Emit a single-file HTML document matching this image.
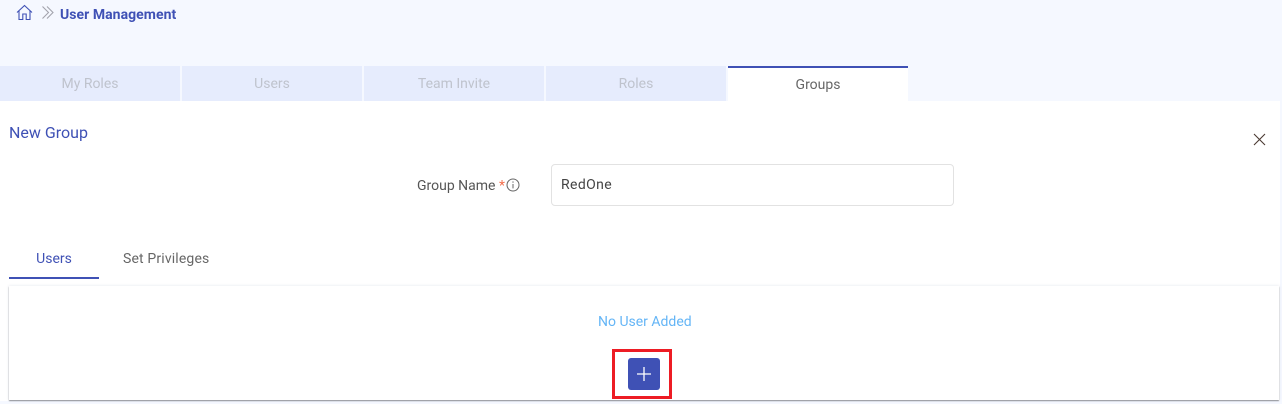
<!DOCTYPE html>
<html><head><meta charset="utf-8">
<style>
html,body{margin:0;padding:0}
body{width:1282px;height:404px;overflow:hidden;background:#f5f8ff;position:relative;font-family:"Roboto","Liberation Sans",sans-serif;font-size:14px}
.a{position:absolute;white-space:nowrap}
.tab{position:absolute;top:66px;height:35px;width:180px;background:#e6ecfd;color:#bfc3cd;text-align:center;line-height:36px;font-size:14px}
.tab.on{background:#fff;color:#666;border-top:2px solid #3f51b5;height:33px;line-height:35px}
</style></head>
<body>
<svg class="a" style="left:16px;top:4px" width="18" height="17" viewBox="0 0 18 17" fill="none" stroke="#3f51b5" stroke-width="1.1"><path d="M1 8.5 8.5 1.5l7.5 7"/><path d="M3 7v8.5h3.8V10h3.4v5.5h3.8V7"/></svg>
<svg class="a" style="left:41px;top:5px" width="15" height="15" viewBox="0 0 15 15" fill="none" stroke="#a3a3ad" stroke-width="1.1"><path d="M1.5 1.5 7.5 7.5l-6 6"/><path d="M6 1.5 12 7.5l-6 6"/></svg>
<div class="a" style="left:60px;top:7px;font-size:14px;font-weight:700;color:#3f51b5;line-height:16px;letter-spacing:.05px">User Management</div>

<div class="tab" style="left:0">My Roles</div>
<div class="tab" style="left:182px">Users</div>
<div class="tab" style="left:364px">Team Invite</div>
<div class="tab" style="left:546px">Roles</div>
<div class="tab on" style="left:728px">Groups</div>

<div class="a" style="left:0;top:101px;width:1280px;height:300px;background:#fff"></div>
<div class="a" style="left:9px;top:124px;font-size:16px;color:#3f51b5;line-height:18px">New Group</div>
<svg class="a" style="left:1253px;top:133px" width="13" height="13" viewBox="0 0 13 13" fill="none" stroke="#4a3a32" stroke-width="1.1"><path d="M1 1l11 11M12 1 1 12"/></svg>

<div class="a" style="left:417px;top:178px;color:#555;line-height:17px">Group Name <span style="color:#f4714f">*</span></div>
<svg class="a" style="left:505px;top:177px" width="16" height="16" viewBox="0 0 16 16" fill="none" stroke="#666" stroke-width="1"><circle cx="8" cy="8" r="6"/><path d="M8 7v4.4M8 4.4v1.3"/></svg>
<div class="a" style="left:551px;top:164px;width:401px;height:40px;border:1px solid #e2e2e2;border-radius:4px;background:#fff"></div>
<div class="a" style="left:561px;top:177px;color:#444;line-height:17px;letter-spacing:.4px">RedOne</div>

<div class="a" style="left:9px;top:251px;width:90px;text-align:center;color:#3f51b5;line-height:16px">Users</div>
<div class="a" style="left:9px;top:277px;width:90px;height:2px;background:#3f51b5"></div>
<div class="a" style="left:123px;top:251px;color:#666;line-height:16px;letter-spacing:.15px">Set Privileges</div>

<div class="a" style="left:9px;top:286px;width:1270px;height:114px;background:#fff;box-shadow:0 1px 1px #8d8f96,0 0 3px rgba(60,70,110,.14)"></div>
<div class="a" style="left:598px;top:314px;color:#64b5f6;line-height:16px">No User Added</div>
<div class="a" style="left:612px;top:349px;width:54px;height:44px;border:3px solid #ed1c24"></div>
<div class="a" style="left:628px;top:358px;width:32px;height:32px;border-radius:3px;background:#3f51b5"></div>
<svg class="a" style="left:637px;top:367px" width="14" height="14" viewBox="0 0 14 14" stroke="#fff" stroke-width="1.3"><path d="M7 0v14M0 7h14"/></svg>
</body></html>
